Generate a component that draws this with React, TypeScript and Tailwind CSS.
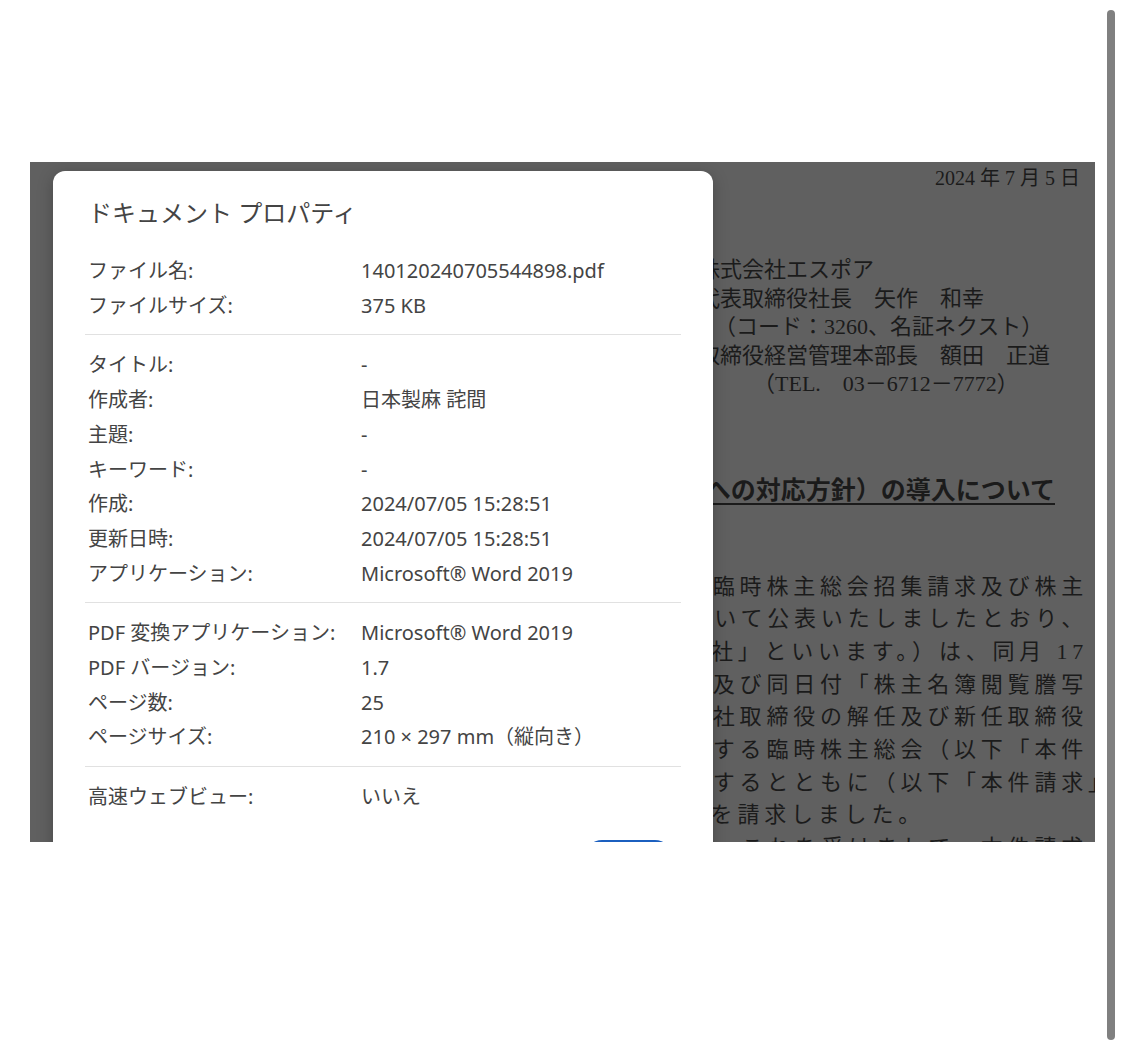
const uiFont = {
  fontFamily: '"Noto Sans", "Noto Sans CJK JP", sans-serif',
};

type Row = { label: string; value: string };

const sections: Row[][] = [
  [
    { label: "ファイル名:", value: "140120240705544898.pdf" },
    { label: "ファイルサイズ:", value: "375 KB" },
  ],
  [
    { label: "タイトル:", value: "-" },
    { label: "作成者:", value: "日本製麻 詫間" },
    { label: "主題:", value: "-" },
    { label: "キーワード:", value: "-" },
    { label: "作成:", value: "2024/07/05 15:28:51" },
    { label: "更新日時:", value: "2024/07/05 15:28:51" },
    { label: "アプリケーション:", value: "Microsoft® Word 2019" },
  ],
  [
    { label: "PDF 変換アプリケーション:", value: "Microsoft® Word 2019" },
    { label: "PDF バージョン:", value: "1.7" },
    { label: "ページ数:", value: "25" },
    { label: "ページサイズ:", value: "210 × 297 mm（縦向き）" },
  ],
  [{ label: "高速ウェブビュー:", value: "いいえ" }],
];

// body of the letter; the left part sits under the dialog
const bodyLines = [
  "同年６月臨時株主総会招集請求及び株主",
  "付けにおいて公表いたしましたとおり、",
  "下「当社」といいます。）は、同月 17",
  "総会招集及び同日付「株主名簿閲覧謄写",
  "目的は当社取締役の解任及び新任取締役",
  "議案とする臨時株主総会（以下「本件",
  "招集を請求するとともに（以下「本件請求」",
  "謄写を請求しました。",
  "当社は、これを受けまして、本件請求",
];

function DocumentPage() {
  return (
    <div
      className="flex flex-col text-[#1b1b1b]"
      style={{ fontFamily: '"Liberation Serif", "Noto Sans CJK JP", serif' }}
    >
      <div className="pt-[2px] pr-[15px] text-right text-[20px] leading-[28px] whitespace-nowrap">
        2024 年 7 月 5 日
      </div>

      <div className="mt-[64px] pl-[668px] text-[22px] leading-[28.5px] whitespace-nowrap">
        <div>株式会社エスポア</div>
        <div>代表取締役社長　矢作　和幸</div>
        <div className="pl-[16px]">（コード：3260、名証ネクスト）</div>
        <div>取締役経営管理本部長　額田　正道</div>
        <div className="pl-[55px]">（TEL.　03－6712－7772）</div>
      </div>

      <div className="mt-[75px] pr-[40px] text-right text-[25px] leading-[34px] font-bold whitespace-nowrap">
        <span className="underline decoration-[1.5px] underline-offset-[4px]">
          （買収への対応方針）の導入について
        </span>
      </div>

      <div className="mt-[63px] pr-[7px] text-right text-[22px] leading-[32.7px] tracking-[4.8px] whitespace-nowrap">
        {bodyLines.map((line, i) => (
          <div
            key={i}
            className={i === 6 ? "-mr-[26.8px]" : i === 7 ? "pr-[163px]" : ""}
          >
            {line}
          </div>
        ))}
      </div>
    </div>
  );
}

function PropertiesDialog() {
  return (
    <div
      className="absolute left-[23px] top-[9px] w-[660px] rounded-[12px] bg-white px-[32px] pt-[27px] pb-[24px] text-[#444444] shadow-[0_4px_16px_rgba(0,0,0,0.25)]"
      style={uiFont}
    >
      <h2 className="pl-[3px] text-[24px] leading-[30px] font-normal">
        ドキュメント プロパティ
      </h2>

      <div className="mt-[26px]">
        {sections.map((rows, si) => (
          <div key={si}>
            {si > 0 && <div className="mt-[11px] mb-[13px] h-px bg-[#e1e1e1]" />}
            {rows.map((r) => (
              <div
                key={r.label}
                className="grid grid-cols-[273px_1fr] pl-[3px] text-[20px] leading-[34.7px] whitespace-nowrap"
              >
                <span>{r.label}</span>
                <span>{r.value}</span>
              </div>
            ))}
          </div>
        ))}
      </div>

      <div className="mt-[25px] flex justify-end pr-[9px]">
        <button className="h-[34px] w-[87px] rounded-full bg-[#1b5fbf] text-[16px] text-white">
          閉じる
        </button>
      </div>
    </div>
  );
}

export default function App() {
  return (
    <div className="flex h-[1047px] w-[1125px] overflow-hidden bg-white">
      <div className="w-[1095px] shrink-0 pt-[162px] pl-[30px]">
        <div className="relative h-[680px] w-[1065px] overflow-hidden bg-[#606060]">
          <DocumentPage />
          <PropertiesDialog />
        </div>
      </div>
      <div className="ml-[12px] mt-[10px] h-[1030px] w-[8px] rounded-full bg-[#808080]" />
    </div>
  );
}
